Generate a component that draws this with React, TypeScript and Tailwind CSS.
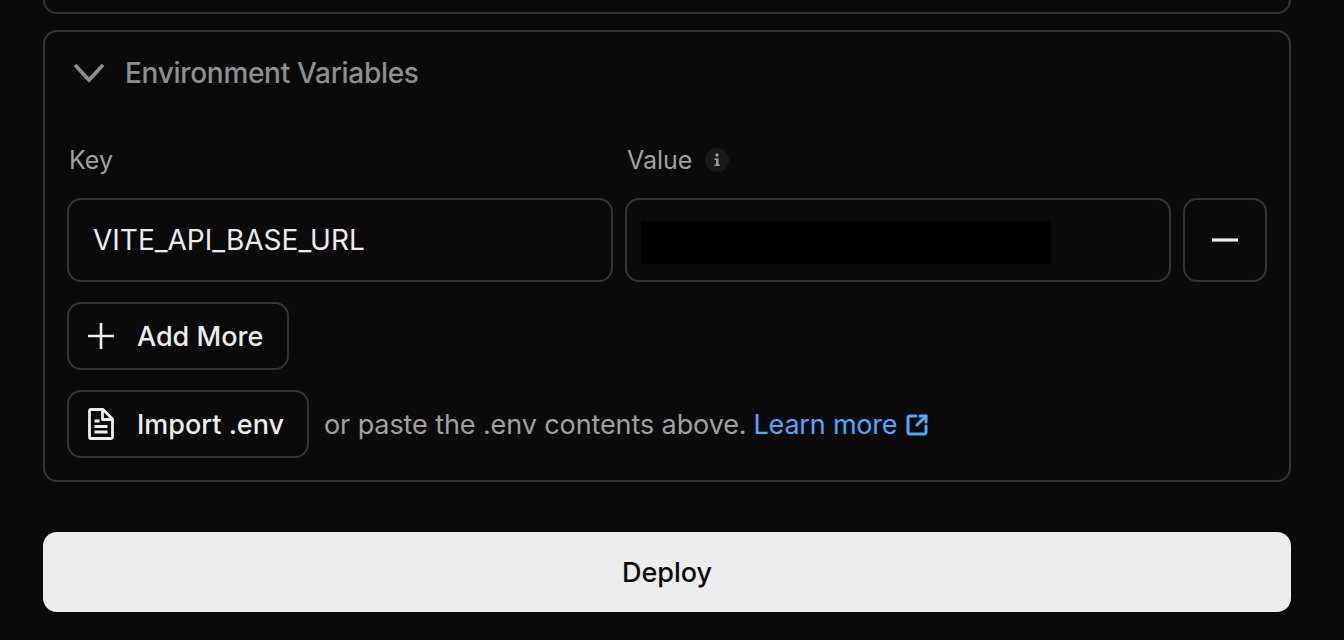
import React from 'react';
import { SquareArrowOutUpRight } from 'lucide-react';

const fontStack = { fontFamily: 'Inter, "Liberation Sans", sans-serif' };

export default function App() {
  return (
    <div className="h-[640px] w-[1344px] overflow-hidden bg-[#0a0a0a] pl-[43px] pr-[53px]" style={fontStack}>
      {/* tail of the previous section */}
      <div className="h-[14px] rounded-b-[14px] border-x-2 border-b-2 border-[#333333]" />

      <section className="mt-[16px] h-[452px] rounded-[14px] border-2 border-[#333333] pl-[22px] pr-[22px]">
        <div className="flex h-[82px] items-center">
          <svg viewBox="0 0 32 20" className="h-[20px] w-[32px] shrink-0 ml-[6px]" fill="none" stroke="#8f8f8f" strokeWidth="3.6">
            <path d="M2 2l14 15L30 2" />
          </svg>
          <h2 className="ml-[20px] text-[28px] leading-[40px] font-medium tracking-[-0.3px] text-[#8f8f8f]">Environment Variables</h2>
        </div>

        <div className="mt-[30px] flex h-[32px] items-center text-[25px] leading-[32px] text-[#a1a1a1]">
          <span className="ml-[2px] w-[558px]">Key</span>
          <span>Value</span>
          <span className="ml-[13px] flex h-[24px] w-[24px] items-center justify-center rounded-full bg-[#1a1a1a]">
            <svg viewBox="0 0 10 14" className="h-[14px] w-[10px]" fill="#a1a1a1">
              <rect x="3.5" y="0.5" width="3" height="3" rx="1" />
              <path d="M2.5 5.5h4v6h1.2v1.5H2.5v-1.5h1.6V7H2.5z" />
            </svg>
          </span>
        </div>

        <div className="mt-[22px] flex gap-[12px]">
          <div className="flex h-[84px] w-[546px] items-center rounded-[14px] border-2 border-[#333333] pl-[24px] text-[28px] text-[#ededed]">
            VITE_API_BASE_URL
          </div>
          <div className="flex h-[84px] w-[546px] items-center rounded-[14px] border-2 border-[#333333] pl-[14px] pt-[5px]">
            <div className="h-[43px] w-[410px] bg-black" />
          </div>
          <button className="flex h-[84px] w-[84px] items-center justify-center rounded-[14px] border-2 border-[#333333]">
            <svg viewBox="0 0 26 4" className="h-[4px] w-[26px]" fill="#ededed">
              <rect width="26" height="3.2" y="0.4" />
            </svg>
          </button>
        </div>

        <button className="mt-[20px] flex h-[68px] w-[222px] items-center rounded-[14px] border-2 border-[#333333] pl-[18px] text-[27px] font-medium text-[#ededed]">
          <svg viewBox="0 0 28 28" className="h-[28px] w-[28px] shrink-0" fill="none" stroke="#ededed" strokeWidth="2.6">
            <path d="M1 14h26M14 1v26" />
          </svg>
          <span className="ml-[22px] pt-[2px]">Add More</span>
        </button>

        <div className="mt-[20px] flex items-center">
          <button className="flex h-[68px] w-[242px] items-center rounded-[14px] border-2 border-[#333333] pl-[18px] text-[27px] font-medium text-[#ededed]">
            <svg viewBox="0 0 28 32" className="h-[32px] w-[28px] shrink-0" fill="none" stroke="#ededed" strokeWidth="2.8" strokeLinejoin="round">
              <path d="M2.5 3a1.5 1.5 0 0 1 1.5-1.5h12L25.5 11v17.5A2 2 0 0 1 23.5 30.5H4A1.5 1.5 0 0 1 2.5 29z" />
              <path d="M15.5 2v9.5h10M7.5 13h5M7.5 18.5h13M7.5 24h13" />
            </svg>
            <span className="ml-[22px] pt-[2px]">Import .env</span>
          </button>
          <span className="ml-[15px] pt-[2px] text-[27px] tracking-[-0.1px] text-[#a1a1a1]">or paste the .env contents above.</span>
          <a className="ml-[7px] flex items-center pt-[2px] text-[27px] tracking-[-0.2px] text-[#52a8ff]">
            Learn more
            <SquareArrowOutUpRight className="ml-[8px] h-[24px] w-[24px]" strokeWidth={3} />
          </a>
        </div>
      </section>

      <button className="mt-[50px] flex h-[80px] w-full items-center justify-center rounded-[14px] bg-[#ededed] pt-[2px] text-[27px] font-medium text-[#0a0a0a]">
        Deploy
      </button>
    </div>
  );
}
